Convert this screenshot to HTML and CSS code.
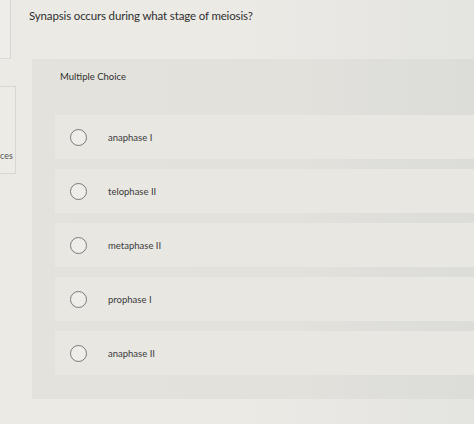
FILE: index.html
```html
<!DOCTYPE html>
<html>
<head>
<meta charset="utf-8">
<link rel="stylesheet" href="styles.css">
</head>
<body>
<div class="page">
  <aside class="side">
    <div class="side-box top"></div>
    <div class="side-box lower"><span class="side-label">ces</span></div>
  </aside>
  <main class="main">
    <p class="question">Synapsis occurs during what stage of meiosis?</p>
    <section class="panel">
      <div class="panel-title">Multiple Choice</div>
      <ul class="options">
        <li class="option"><span class="radio"></span><span class="label">anaphase I</span></li>
        <li class="option"><span class="radio"></span><span class="label">telophase II</span></li>
        <li class="option"><span class="radio"></span><span class="label">metaphase II</span></li>
        <li class="option"><span class="radio"></span><span class="label">prophase I</span></li>
        <li class="option"><span class="radio"></span><span class="label">anaphase II</span></li>
      </ul>
    </section>
  </main>
</div>
</body>
</html>
```
FILE: styles.css
```css
html, body {
  margin: 0;
  padding: 0;
}
body {
  width: 474px;
  height: 424px;
  overflow: hidden;
  background: linear-gradient(90deg, #ebeae5 0%, #eceae5 50%, #e4e4e0 100%);
  font-family: Lato, "Open Sans", "Liberation Sans", sans-serif;
  color: #3a3a3a;
}
.page {
  display: flex;
  height: 424px;
}
.side {
  width: 18px;
  flex: none;
  display: flex;
  flex-direction: column;
}
.side-box.top {
  width: 10px;
  height: 58px;
  border-right: 1px solid #d6d5d0;
  border-bottom: 1px solid #dddcd7;
  background: #eeede9;
}
.side-box.lower {
  margin-top: 27px;
  width: 16px;
  height: 88px;
  border: 1px solid #d8d7d2;
  border-left: none;
  background: #ecebe6;
  display: flex;
  align-items: flex-end;
  padding-bottom: 12px;
  box-sizing: border-box;
  overflow: hidden;
}
.side-label {
  font-size: 9px;
  color: #555;
  line-height: 10px;
}
.main {
  flex: 1;
  padding-top: 8px;
  min-width: 0;
}
.question {
  margin: 0 0 0 11px;
  font-size: 11.5px;
  letter-spacing: -0.15px;
  line-height: 16px;
  color: #2f2f2f;
}
.panel {
  margin: 35px 0 0 14px;
  height: 340px;
  background: linear-gradient(90deg, #e3e2dd 0%, #e2e1dc 60%, #dcdcd8 100%);
  padding-top: 12px;
  box-sizing: border-box;
}
.panel-title {
  padding-left: 28px;
  font-size: 9.5px;
  line-height: 12px;
  color: #2f2f2f;
}
.options {
  list-style: none;
  margin: 32px 0 0 23px;
  padding: 0;
  display: flex;
  flex-direction: column;
  gap: 10px;
}
.option {
  height: 44px;
  display: flex;
  align-items: center;
  padding-left: 15px;
  background: #e8e7e2;
}
.radio {
  width: 15px;
  height: 15px;
  border: 1.3px solid #7a7a78;
  border-radius: 50%;
  flex: none;
  background: #eeede9;
}
.label {
  margin-left: 21px;
  font-size: 9.5px;
  color: #3a3a3a;
}
```
